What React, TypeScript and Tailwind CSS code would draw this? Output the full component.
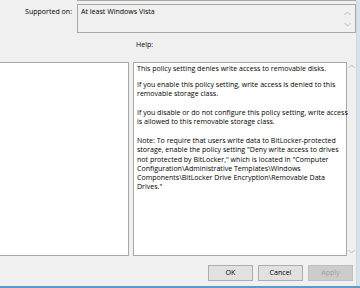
import React from "react";

const Up = () => (
  <svg width="7" height="5" viewBox="0 0 7 5" className="block">
    <polyline points="0.5,4 3.5,1 6.5,4" fill="none" stroke="#b8b8b8" strokeWidth="1" />
  </svg>
);
const Down = () => (
  <svg width="7" height="5" viewBox="0 0 7 5" className="block">
    <polyline points="0.5,1 3.5,4 6.5,1" fill="none" stroke="#b8b8b8" strokeWidth="1" />
  </svg>
);

const Btn = ({ label, disabled }: { label: string; disabled?: boolean }) => (
  <div
    className={
      "w-[45px] h-[16px] flex items-center justify-center border " +
      (disabled
        ? "bg-[#cccccc] border-[#bfbfbf] text-[#a0a0a0]"
        : "bg-[#e1e1e1] border-[#adadad] text-black")
    }
  >
    {label}
  </div>
);

export default function App() {
  const font = { fontFamily: '"Open Sans", "Noto Sans", sans-serif' };
  return (
    <div
      className="w-[360px] h-[288px] bg-[#f0f0f0] flex flex-col overflow-hidden text-[7.05px] leading-[9.2px] text-black"
      style={font}
    >
      <div className="flex flex-1 min-h-0">
        <div className="flex-1 flex flex-col">
          <div className="ml-[77px] h-px bg-[#a8a8a8]" />
          <div className="flex mt-[3px]">
            <div className="w-[77px] pr-[5px] pt-[3px] text-right whitespace-nowrap">Supported on:</div>
            <div className="flex-1 h-[29px] border border-[#a8a8a8] flex justify-between pl-[3px] pt-[2px]">
              <span className="whitespace-nowrap">At least Windows Vista</span>
              <div className="flex flex-col justify-between pr-[4px] pt-[4px] pb-[5px]">
                <Up />
                <Down />
              </div>
            </div>
          </div>
          <div className="pl-[136px] mt-[7px] h-[14px]">Help:</div>
          <div className="flex mt-[8px] h-[194px]">
            <div className="w-[129px] bg-white border border-l-0 border-[#a8a8a8]" />
            <div className="w-[214px] ml-[4px] bg-white border border-[#a8a8a8] pl-[3px] pt-[1px] whitespace-nowrap">
              <p className="mb-[7px]">This policy setting denies write access to removable disks.</p>
              <p className="mb-[9.6px]">
                If you enable this policy setting, write access is denied to this
                <br />
                removable storage class.
              </p>
              <p className="mb-[9.6px]">
                If you disable or do not configure this policy setting, write access
                <br />
                is allowed to this removable storage class.
              </p>
              <p>
                Note: To require that users write data to BitLocker-protected
                <br />
                storage, enable the policy setting "Deny write access to drives
                <br />
                not protected by BitLocker," which is located in "Computer
                <br />
                Configuration\Administrative Templates\Windows
                <br />
                Components\BitLocker Drive Encryption\Removable Data
                <br />
                Drives."
              </p>
            </div>
            <div className="flex-1 flex flex-col justify-between items-center pt-[2px] pb-[2px]">
              <Up />
              <Down />
            </div>
          </div>
          <div className="flex justify-end gap-[5px] mt-[9px] pr-[3px]">
            <Btn label="OK" />
            <Btn label="Cancel" />
            <Btn label="Apply" disabled />
          </div>
        </div>
        <div className="w-[4px] border-l border-[#d6d6d6] bg-[#d5e3ec]" />
      </div>
      <div className="h-[2px] bg-[#5d9bc6]" />
    </div>
  );
}
